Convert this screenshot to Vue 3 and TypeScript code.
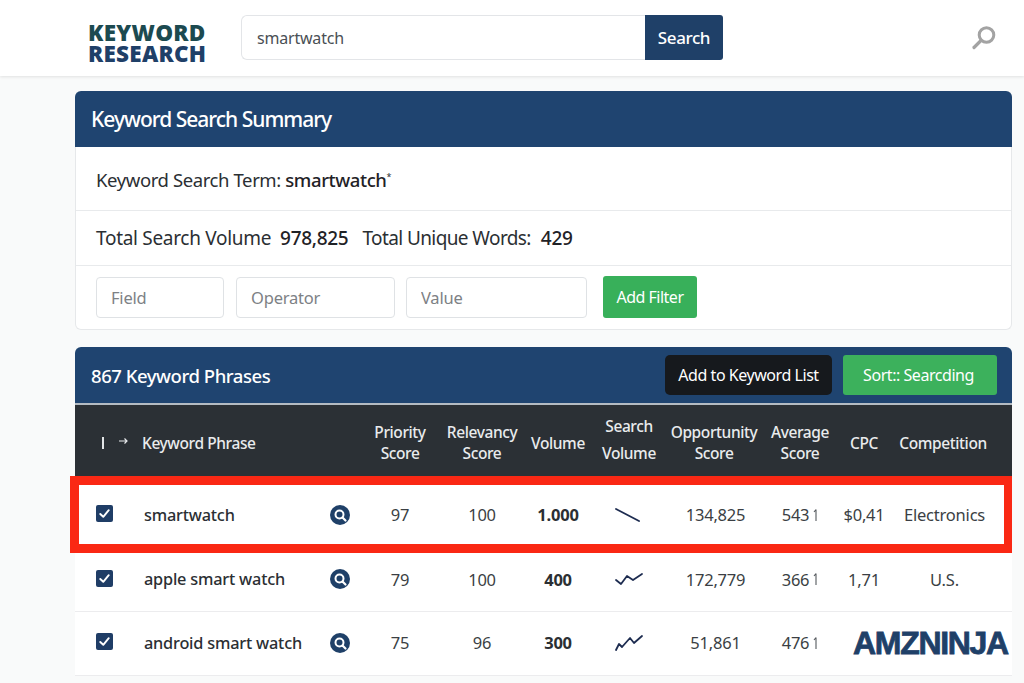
<script setup lang="ts">
interface Row {
  phrase: string;
  priority: string;
  relevancy: string;
  volume: string;
  spark: string;
  opportunity: string;
  average: string;
  cpc: string;
  competition: string;
  highlight?: boolean;
}

const rows: Row[] = [
  { phrase: 'smartwatch', priority: '97', relevancy: '100', volume: '1.000', spark: '1,6 24,18', opportunity: '134,825', average: '543', cpc: '$0,41', competition: 'Electronics', highlight: true },
  { phrase: 'apple smart watch', priority: '79', relevancy: '100', volume: '400', spark: '1,13 6,17 12,9 18,13 27,7', opportunity: '172,779', average: '366', cpc: '1,71', competition: 'U.S.' },
  { phrase: 'android smart watch', priority: '75', relevancy: '96', volume: '300', spark: '1,19 4,13 7,16 15,7 19,12 27,5', opportunity: '51,861', average: '476', cpc: '', competition: '' },
];
</script>

<template>
  <div class="page">
    <header class="topbar">
      <div class="logo">
        <span class="logo-top">KEYWORD</span>
        <span class="logo-bottom">RESEARCH</span>
      </div>
      <div class="search">
        <input class="search-input" type="text" value="smartwatch" />
        <button class="search-btn">Search</button>
      </div>
      <svg class="top-icon" viewBox="0 0 26 26" width="26" height="26" fill="none" stroke="#a3a3a3">
        <circle cx="15.5" cy="10" r="7.3" stroke-width="3" />
        <line x1="10" y1="15.5" x2="3" y2="22.5" stroke-width="3.2" stroke-linecap="round" />
      </svg>
    </header>

    <section class="card summary">
      <h2 class="card-title">Keyword Search Summary</h2>
      <div class="line term">Keyword Search Term: <b>smartwatch</b><sup>*</sup></div>
      <div class="line totals">
        <span>Total Search Volume</span><b class="num">978,825</b><span class="unique">Total Unique Words:</span><b class="words">429</b>
      </div>
      <div class="filters">
        <input class="filter f-field" placeholder="Field" />
        <input class="filter f-op" placeholder="Operator" />
        <input class="filter f-val" placeholder="Value" />
        <button class="add-filter">Add Filter</button>
      </div>
    </section>

    <section class="card results">
      <div class="results-bar">
        <h2 class="results-title">867 Keyword Phrases</h2>
        <button class="btn-dark">Add to Keyword List</button>
        <button class="btn-green">Sort:: Searcding</button>
      </div>
      <div class="grid head">
        <div class="head-first">
          <i class="pipe"></i>
          <svg class="arrow" viewBox="0 0 9 8" width="9" height="8" fill="none" stroke="#e9ebed" stroke-width="1.2"><path d="M0 4 H8 M5.5 1.5 L8 4 L5.5 6.5" /></svg>
        </div>
        <div class="left">Keyword Phrase</div>
        <div>Priority<br />Score</div>
        <div>Relevancy<br />Score</div>
        <div>Volume</div>
        <div class="up">Search<br />Volume</div>
        <div>Opportunity<br />Score</div>
        <div>Average<br />Score</div>
        <div>CPC</div>
        <div>Competition</div>
      </div>
      <div v-for="row in rows" :key="row.phrase" class="grid row" :class="{ hl: row.highlight }">
        <div class="check-cell">
          <span class="check">
            <svg viewBox="0 0 18 18" width="17" height="17" fill="none" stroke="#fff" stroke-width="2" stroke-linecap="round" stroke-linejoin="round"><path d="M4.5 9.5 L7.7 12.5 L13.5 5.5" /></svg>
          </span>
        </div>
        <div class="phrase">
          <span>{{ row.phrase }}</span>
          <svg class="lens" viewBox="0 0 20 20" width="20" height="20">
            <circle cx="10" cy="10" r="10" fill="#1f4068" />
            <circle cx="9.5" cy="9.5" r="4" fill="none" stroke="#fff" stroke-width="2" />
            <line x1="12.5" y1="12.5" x2="15.5" y2="15.5" stroke="#fff" stroke-width="2.2" stroke-linecap="round" />
          </svg>
        </div>
        <div>{{ row.priority }}</div>
        <div>{{ row.relevancy }}</div>
        <div class="vol">{{ row.volume }}</div>
        <div class="spark">
          <svg viewBox="0 0 28 24" width="28" height="24" fill="none" stroke="#1d2c50" stroke-width="1.8" stroke-linecap="round" stroke-linejoin="round"><polyline :points="row.spark" /></svg>
        </div>
        <div class="nudge">{{ row.opportunity }}</div>
        <div class="avg">{{ row.average }}<svg class="tick" viewBox="0 0 5 14" width="5" height="14" fill="none" stroke="#55595e" stroke-width="1.1"><path d="M3 1.5 V13 M3 1.5 L1 4" /></svg></div>
        <div>{{ row.cpc }}</div>
        <div class="nudge">{{ row.competition }}</div>
      </div>
    </section>
    <div class="brand">AMZNINJA</div>
  </div>
</template>

<style>
html, body { margin: 0; background: #f8f9fa; overflow: hidden; }
</style>

<style scoped>
.page {
  position: relative;
  height: 683px;
  overflow: hidden;
  background: #f9fafa;
  font-family: "Noto Sans", "Open Sans", sans-serif;
  color: #2b2f33;
}
.topbar {
  height: 76px;
  background: #fff;
  box-shadow: 0 1px 3px rgba(0, 0, 0, 0.1);
  display: flex;
  align-items: center;
  padding: 0 27px 0 88px;
  box-sizing: border-box;
}
.logo {
  width: 153px;
  display: flex;
  flex-direction: column;
  font-family: "Open Sans", sans-serif;
  font-weight: 800;
  font-size: 22.5px;
  letter-spacing: 0.25px;
  line-height: 21px;
  margin-top: 9px;
}
.logo-top { color: #1c4a50; }
.logo-bottom { color: #1f4068; }
.search { display: flex; width: 482px; height: 45px; margin-top: -1px; }
.search-input {
  flex: 1;
  min-width: 0;
  box-sizing: border-box;
  border: 1px solid #e3e5e8;
  border-right: 0;
  border-radius: 6px 0 0 6px;
  padding: 0 15px;
  font: 400 16px "Noto Sans", sans-serif;
  letter-spacing: -0.2px;
  color: #4a4f55;
  outline: none;
}
.search-btn {
  width: 78px;
  border: 0;
  border-radius: 0 3px 3px 0;
  background: #1f4068;
  color: #fff;
  font: 500 17px "Noto Sans", sans-serif;
  letter-spacing: -0.4px;
}
.top-icon { margin-left: auto; margin-top: -1px; }
.card {
  margin: 0 12px 0 75px;
  background: #fff;
  border-radius: 6px;
}
.summary {
  margin-top: 15px;
  height: 239px;
  box-sizing: border-box;
  border: 1px solid #e6e8ea;
  border-top: 0;
}
.card-title {
  margin: 0 -1px;
  height: 56px;
  background: #1f4470;
  border-radius: 6px 6px 0 0;
  color: #fff;
  font-size: 21px;
  font-weight: 500;
  letter-spacing: -1px;
  line-height: 56px;
  padding-left: 16px;
}
.line {
  font-size: 19px;
  letter-spacing: -0.3px;
  color: #2b2f33;
  padding-left: 20px;
  display: flex;
  align-items: center;
  white-space: pre;
  border-bottom: 1px solid #e8eaec;
  box-sizing: border-box;
}
.line b { font-weight: 500; color: #1f2226; }
.term { height: 64px; padding-top: 2px; font-size: 18.5px; letter-spacing: -0.4px; }
.term sup { font-size: 9px; align-self: flex-start; margin-top: 21px; }
.totals { height: 55px; }
.num { margin-left: 9px; }
.unique { margin-left: 14px; letter-spacing: -0.6px; }
.words { margin-left: 10px; }
.filters { display: flex; align-items: center; padding: 10px 0 0 20px; }
.filter {
  box-sizing: border-box;
  height: 41px;
  border: 1px solid #dfe2e5;
  border-radius: 4px;
  padding: 0 14px;
  font: 400 16.5px "Noto Sans", sans-serif;
  letter-spacing: -0.2px;
  background: #fff;
}
.filter::placeholder { color: #7d8185; opacity: 1; }
.f-field { width: 128px; margin-right: 12px; }
.f-op { width: 159px; margin-right: 11px; }
.f-val { width: 181px; margin-right: 16px; }
.add-filter {
  width: 94px;
  height: 42px;
  border: 0;
  border-radius: 3px;
  background: #38b05a;
  color: #fff;
  font: 400 16px "Noto Sans", sans-serif;
  letter-spacing: -0.5px;
}
.results { margin-top: 17px; background: transparent; }
.results-bar {
  height: 56px;
  background: #1f4470;
  border-radius: 6px 6px 0 0;
  border-bottom: 2px solid #b4bbc2;
  display: flex;
  align-items: center;
  padding: 0 15px 0 16px;
  box-sizing: content-box;
}
.results-title {
  margin: 0 auto 0 0;
  color: #fff;
  font-size: 18.5px;
  font-weight: 500;
  letter-spacing: -0.45px;
}
.btn-dark, .btn-green {
  height: 40px;
  border: 0;
  border-radius: 5px;
  color: #fff;
  font: 400 16px "Noto Sans", sans-serif;
  letter-spacing: -0.45px;
  margin-top: -1px;
}
.btn-dark { width: 167px; background: #16191d; margin-right: 11px; }
.btn-green { width: 154px; background: #3cb15c; border-radius: 3px; padding-right: 9px; }
.grid {
  display: grid;
  grid-template-columns: 67px 220px 76px 88px 64px 78px 92px 80px 48px 110px;
  padding-right: 14px;
  align-items: center;
  justify-items: center;
  text-align: center;
}
.head {
  height: 71px;
  box-sizing: border-box;
  padding-top: 5px;
  background: #2b3035;
  color: #e9ebed;
  font-size: 15.5px;
  font-weight: 500;
  letter-spacing: -0.4px;
  line-height: 21px;
}
.left { justify-self: start; }
.up { margin-top: -7px; line-height: 27px; }
.head-first { justify-self: start; display: flex; align-items: center; padding-left: 27px; }
.pipe { display: block; width: 2px; height: 12px; background: #e2e4e6; }
.arrow { margin-left: 15px; margin-top: -4px; }
.row {
  position: relative;
  background: #fff;
  font-size: 16.5px;
  letter-spacing: -0.2px;
  color: #3b3f44;
  border-bottom: 1px solid #ececee;
  height: 59px;
  box-sizing: border-box;
  padding-bottom: 6px;
}
.row:last-child { height: 64px; padding-bottom: 2px; }
.row.hl {
  height: 77px;
  border-bottom: 0;
  padding-bottom: 0;
}
.row.hl::after {
  content: "";
  position: absolute;
  inset: 0 0 0 -5px;
  border: 9px solid #fa2814;
  border-right-width: 8px;
  pointer-events: none;
}
.check-cell { justify-self: start; padding-left: 21px; display: flex; margin-top: -2px; }
.check {
  display: flex;
  width: 17px;
  height: 17px;
  background: #1f3d66;
  border-radius: 2px;
}
.phrase {
  justify-self: stretch;
  display: flex;
  align-items: center;
  justify-content: space-between;
  padding: 0 12px 0 2px;
  font-size: 16.3px;
  font-weight: 500;
  color: #2b2f33;
  text-align: left;
}
.lens { flex: none; }
.vol { font-weight: 700; color: #2b2f33; }
.spark { display: flex; }
.nudge { padding-left: 3px; }
.avg { display: flex; align-items: center; gap: 4px; }
.tick { flex: none; }
.brand {
  position: absolute;
  left: 853px;
  top: 624px;
  font-family: "Liberation Sans", sans-serif;
  font-weight: 700;
  font-size: 32px;
  line-height: 38px;
  letter-spacing: -1.3px;
  color: #1f4068;
  -webkit-text-stroke: 0.8px #1f4068;
}
</style>
